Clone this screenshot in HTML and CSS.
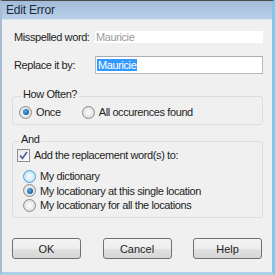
FILE: index.html
```html
<!DOCTYPE html>
<html lang="en">
<head>
<meta charset="UTF-8">
<title>Edit Error</title>
<link rel="stylesheet" href="styles.css">
</head>
<body>
<div class="window">
    <div class="titlebar">Edit Error</div>
    <div class="content">
        <div class="row first">
            <span class="label">Misspelled word:</span>
            <span class="readonly">Mauricie</span>
        </div>
        <div class="row second">
            <span class="label">Replace it by:</span>
            <span class="input"><span class="selected">Mauricie</span></span>
        </div>

        <fieldset class="group often">
            <legend>How Often?</legend>
            <div class="inline">
                <span class="option"><span class="radio checked"></span>Once</span>
                <span class="option"><span class="radio"></span>All occurences found</span>
            </div>
        </fieldset>

        <fieldset class="group and">
            <legend>And</legend>
            <div class="option check-row">
                <span class="checkbox">
                    <svg width="9" height="9" viewBox="0 0 9 9"><path d="M1 4.5 L3.4 7.5 L8 1" fill="none" stroke="#4a5f97" stroke-width="1.6"/></svg>
                </span>Add the replacement word(s) to:
            </div>
            <div class="choices">
                <div class="option"><span class="radio hover"></span>My dictionary</div>
                <div class="option"><span class="radio checked"></span>My locationary at this single location</div>
                <div class="option"><span class="radio"></span>My locationary for all the locations</div>
            </div>
        </fieldset>

        <div class="buttons">
            <button class="button">OK</button>
            <button class="button">Cancel</button>
            <button class="button">Help</button>
        </div>
    </div>
</div>
</body>
</html>
```

FILE: styles.css
```css
body {
    margin: 0;
    font-family: "Liberation Sans", Arial, sans-serif;
    font-size: 11px;
    letter-spacing: -0.4px;
    color: #1e1e1e;
}
.window {
    width: 275px;
    height: 275px;
    box-sizing: border-box;
    background-color: #f0f0f0;
    border-top: 1px solid #4a4a4a;
    border-left: 2px solid #a7bdd6;
    border-right: 3px solid #7ccbee;
    border-bottom: 3px solid #a9cfe9;
    display: flex;
    flex-direction: column;
}
.titlebar {
    height: 18px;
    line-height: 19px;
    padding-left: 4px;
    font-size: 12px;
    letter-spacing: -0.2px;
    color: #1b2a3a;
    background: linear-gradient(#a3bcd9, #b9cfe7);
    border-bottom: 1px solid #dbe6f1;
}
.content {
    padding: 0 9px 0 10px;
}
.row {
    display: flex;
    align-items: center;
    padding-left: 2px;
}
.row.first {
    margin-top: 11px;
    height: 12px;
}
.row.second {
    margin-top: 13px;
    height: 18px;
}
.label {
    width: 81px;
}
.readonly {
    flex: 1;
    height: 12px;
    line-height: 12px;
    background: #fff;
    color: #9a9a9a;
    padding-left: 1px;
}
.input {
    flex: 1;
    height: 16px;
    border: 1px solid #b5b9c2;
    border-top-color: #abadb3;
    background: #fff;
    display: flex;
    align-items: center;
    padding-left: 1px;
}
.selected {
    background: #3399ff;
    color: #fff;
    line-height: 12px;
    padding: 0 1px;
}
.group {
    margin: 0;
    border: 1px solid #d5dfe5;
    border-radius: 3px;
    padding: 0 6px;
}
.group legend {
    padding: 0 2px 4px;
    margin-left: 2px;
    line-height: 13px;
}
.often {
    margin-top: 14px;
    padding-top: 0;
    padding-bottom: 5px;
}
.inline {
    display: flex;
    gap: 21px;
}
.option {
    display: flex;
    align-items: center;
    height: 14px;
}
.radio {
    width: 11px;
    height: 11px;
    border-radius: 50%;
    border: 1px solid #8d8d8d;
    background: radial-gradient(circle, #f4f4f4 30%, #dcdcdc 75%);
    margin-right: 4px;
    position: relative;
}
.radio.checked::after {
    content: "";
    position: absolute;
    left: 2.5px;
    top: 2.5px;
    width: 6px;
    height: 6px;
    border-radius: 50%;
    background: radial-gradient(circle at 40% 40%, #5bb3ea, #1b5c9c 70%);
}
.radio.hover {
    border-color: #4b9fd8;
    background: radial-gradient(circle, #e9f6fd 30%, #b6dff6 80%);
}
.and {
    margin-top: 8px;
    padding: 0 5px 5px 4px;
}
.check-row {
    margin-top: -2px;
}
.checkbox {
    width: 11px;
    height: 11px;
    border: 1px solid #8e8f8f;
    background: linear-gradient(135deg, #e6e6e6, #ffffff);
    margin-right: 4px;
    display: flex;
    align-items: center;
    justify-content: center;
}
.choices {
    margin-top: 7px;
    padding-left: 6px;
    display: flex;
    flex-direction: column;
    gap: 0.5px;
}
.buttons {
    margin-top: 20px;
    display: flex;
    justify-content: space-between;
    padding-right: 1px;
}
.button {
    width: 69px;
    height: 21px;
    font-family: "Liberation Sans", Arial, sans-serif;
    font-size: 11px;
    color: #1e1e1e;
    border: 1px solid #707070;
    border-radius: 3px;
    background: linear-gradient(#f4f4f4 0%, #ededed 50%, #e2e2e2 51%, #d6d6d6 100%);
    padding: 0;
}
```
